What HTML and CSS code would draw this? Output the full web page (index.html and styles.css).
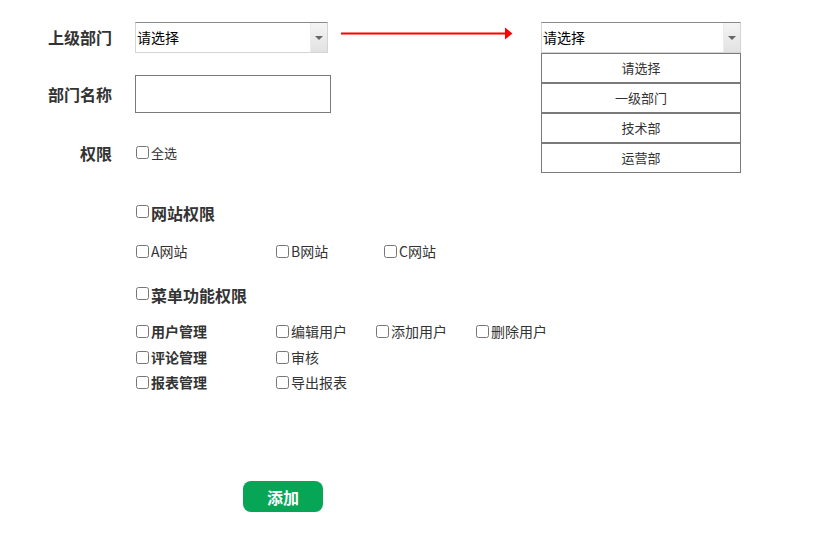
FILE: index.html
```html
<!DOCTYPE html>
<html lang="zh-CN">
<head>
<meta charset="utf-8">
<title>添加部门</title>
<link rel="stylesheet" href="styles.css">
</head>
<body>
<div class="page">
  <div class="row r1">
    <div class="lbl">上级部门</div>
    <div class="select"><span class="val">请选择</span><span class="btn"><i class="tri"></i></span></div>
    <svg class="arrow" width="172" height="13" viewBox="0 0 172 13"><rect x="0" y="5.5" width="166" height="2" fill="#f00"/><polygon points="164,0.5 171.5,6.5 164,12.5" fill="#f00"/></svg>
    <div class="dd">
      <div class="select wide"><span class="val">请选择</span><span class="btn"><i class="tri"></i></span></div>
      <ul class="menu">
        <li>请选择</li>
        <li>一级部门</li>
        <li>技术部</li>
        <li>运营部</li>
      </ul>
    </div>
  </div>
  <div class="row r2">
    <div class="lbl">部门名称</div>
    <div class="input"></div>
  </div>
  <div class="row r3">
    <div class="lbl">权限</div>
    <label class="cb"><input type="checkbox">全选</label>
  </div>
  <div class="row r4 indent">
    <label class="cb head"><input type="checkbox">网站权限</label>
  </div>
  <div class="row r5 indent">
    <label class="cb item w140"><input type="checkbox">A网站</label>
    <label class="cb item w108"><input type="checkbox">B网站</label>
    <label class="cb item"><input type="checkbox">C网站</label>
  </div>
  <div class="row r6 indent">
    <label class="cb head"><input type="checkbox">菜单功能权限</label>
  </div>
  <div class="row r7 indent">
    <label class="cb item w140 bold"><input type="checkbox">用户管理</label>
    <label class="cb item w100"><input type="checkbox">编辑用户</label>
    <label class="cb item w100"><input type="checkbox">添加用户</label>
    <label class="cb item"><input type="checkbox">删除用户</label>
  </div>
  <div class="row r8 indent">
    <label class="cb item w140 bold"><input type="checkbox">评论管理</label>
    <label class="cb item"><input type="checkbox">审核</label>
  </div>
  <div class="row r9 indent">
    <label class="cb item w140 bold"><input type="checkbox">报表管理</label>
    <label class="cb item"><input type="checkbox">导出报表</label>
  </div>
  <div class="actions">
    <button class="submit" type="button">添加</button>
  </div>
</div>
</body>
</html>
```

FILE: styles.css
```css
* { box-sizing: border-box; }
html, body { margin: 0; padding: 0; background: #fff; }
body {
  font-family: "Microsoft YaHei", "Noto Sans CJK SC", sans-serif;
  color: #333;
  font-size: 13px;
  line-height: 1.3;
}
.page { padding-top: 22px; width: 816px; }
.row { display: flex; align-items: center; height: 20px; }
.lbl {
  width: 112px;
  margin-right: 23px;
  text-align: right;
  font-size: 16px;
  font-weight: bold;
  color: #333;
}
.r1 { height: 31px; margin-top: 0; }
.r2 { height: 38px; margin-top: 22px; }
.r3 { margin-top: 30px; }
.r4 { margin-top: 40px; }
.r5 { margin-top: 18px; }
.r6 { margin-top: 24px; }
.r7 { margin-top: 16px; }
.r8 { margin-top: 6px; }
.r9 { margin-top: 5px; }
.indent { padding-left: 135px; }

.select {
  display: flex;
  align-items: stretch;
  width: 193px;
  height: 31px;
  border: 1px solid #d4d4d4;
  border-top-color: #8a8a8a;
  background: #fff;
}
.select.wide { width: 200px; }
.select .val {
  flex: 1;
  display: flex;
  align-items: center;
  padding-left: 1px;
  font-size: 14px;
  color: #000;
}
.select .btn {
  width: 17px;
  display: flex;
  align-items: center;
  justify-content: center;
  background: linear-gradient(#f4f4f4, #e2e2e2);
  border-left: 1px solid #ececec;
}
.tri {
  width: 0; height: 0;
  border-left: 4px solid transparent;
  border-right: 4px solid transparent;
  border-top: 4px solid #666;
  margin-top: 1px;
}
.arrow { margin-left: 13px; display: block; align-self: flex-start; margin-top: 5px; }
.dd { position: relative; margin-left: 28px; }
.menu {
  position: absolute;
  top: 100%;
  left: 0;
  width: 200px;
  margin: 0;
  padding: 0;
  list-style: none;
}
.menu li {
  height: 30px;
  border: 1px solid #7b7b7b;
  display: flex;
  align-items: center;
  justify-content: center;
  font-size: 13px;
  color: #333;
  background: #fff;
}
.input {
  width: 196px;
  height: 38px;
  border: 1px solid #7a7a7a;
  background: #fff;
}
.cb {
  display: flex;
  align-items: center;
  font-size: 13px;
  color: #333;
  white-space: nowrap;
}
.cb.item { font-size: 14px; }
.cb input {
  width: 13px;
  height: 13px;
  margin: 0 2px 0 1px;
}
.cb.head { font-size: 16px; font-weight: bold; }
.cb.head input { margin-top: -3px; }
.cb.bold { font-weight: bold; }
.w140 { width: 140px; }
.w108 { width: 108px; }
.w100 { width: 100px; }
.actions { margin-top: 89px; padding-left: 243px; }
.submit {
  width: 80px;
  height: 31px;
  border: none;
  border-radius: 8px;
  background: #06a656;
  color: #fff;
  font-family: inherit;
  font-size: 16px;
  font-weight: bold;
  padding: 0;
}
```
